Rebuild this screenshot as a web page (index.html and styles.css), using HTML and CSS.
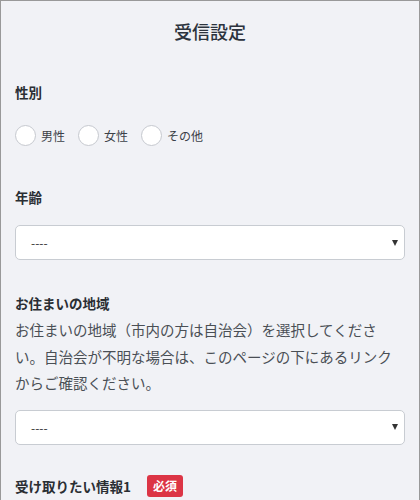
FILE: index.html
```html
<!DOCTYPE html>
<html lang="ja">
<head>
    <meta charset="UTF-8">
    <meta name="viewport" content="width=device-width, initial-scale=1.0">
    <title>受信設定</title>
    <link rel="stylesheet" href="styles.css">
</head>
<body>
    <div class="frame">
        <h1 class="title">受信設定</h1>

        <div class="field">
            <div class="label">性別</div>
            <div class="radios">
                <label class="radio"><span class="circle"></span>男性</label>
                <label class="radio"><span class="circle"></span>女性</label>
                <label class="radio"><span class="circle"></span>その他</label>
            </div>
        </div>

        <div class="field field-gap">
            <div class="label">年齢</div>
            <div class="select">
                <span>----</span>
                <span class="arrow"></span>
            </div>
        </div>

        <div class="field field-gap2">
            <div class="label">お住まいの地域</div>
            <p class="help">お住まいの地域（市内の方は自治会）を選択してください。自治会が不明な場合は、このページの下にあるリンクからご確認ください。</p>
            <div class="select select-tight">
                <span>----</span>
                <span class="arrow"></span>
            </div>
        </div>

        <div class="field field-gap3">
            <div class="label">受け取りたい情報1 <span class="badge">必須</span></div>
        </div>
    </div>
</body>
</html>
```

FILE: styles.css
```css
body {
    margin: 0;
    background-color: #f1f2f6;
    font-family: "Noto Sans CJK JP", "Noto Sans", sans-serif;
    color: #2f343a;
    overflow: hidden;
}
.frame {
    height: 500px;
    box-sizing: border-box;
    border: 1px solid #999;
    border-bottom: none;
    padding: 0 14px;
}
.title {
    margin: 0;
    padding-top: 19px;
    font-size: 18px;
    line-height: 22px;
    font-weight: 500;
    text-align: center;
    color: #2c333d;
}
.field {
    margin-top: 40px;
}
.field-gap {
    margin-top: 41px;
}
.field-gap2 {
    margin-top: 33px;
}
.field-gap3 {
    margin-top: 30px;
}
.label {
    font-size: 13.5px;
    line-height: 20px;
    font-weight: 700;
    color: #2a2e33;
    display: flex;
    align-items: center;
}
.radios {
    display: flex;
    gap: 13px;
    margin-top: 23px;
}
.radio {
    display: flex;
    align-items: center;
    gap: 5px;
    font-size: 12px;
    color: #3c4148;
}
.circle {
    width: 19px;
    height: 19px;
    border: 1px solid #c6c9cf;
    border-radius: 50%;
    background: #fff;
}
.select {
    margin-top: 18px;
    height: 35px;
    box-sizing: border-box;
    border: 1px solid #c8ccd2;
    border-radius: 5px;
    background: #fff;
    display: flex;
    align-items: center;
    justify-content: space-between;
    padding: 0 6px 0 15px;
    font-size: 12px;
    color: #333;
}
.select-tight {
    margin-top: 13px;
}
.arrow {
    width: 0;
    height: 0;
    border-left: 3.5px solid transparent;
    border-right: 3.5px solid transparent;
    border-top: 6px solid #333;
}
.help {
    margin: 4px 0 0;
    font-size: 14.5px;
    line-height: 26.5px;
    color: #4a4f55;
    width: 388px;
}
.badge {
    margin-left: 16px;
    background: #dc3545;
    color: #fff;
    font-size: 12px;
    font-weight: 700;
    padding: 2px 6px;
    border-radius: 3px;
    line-height: 18px;
}
```
